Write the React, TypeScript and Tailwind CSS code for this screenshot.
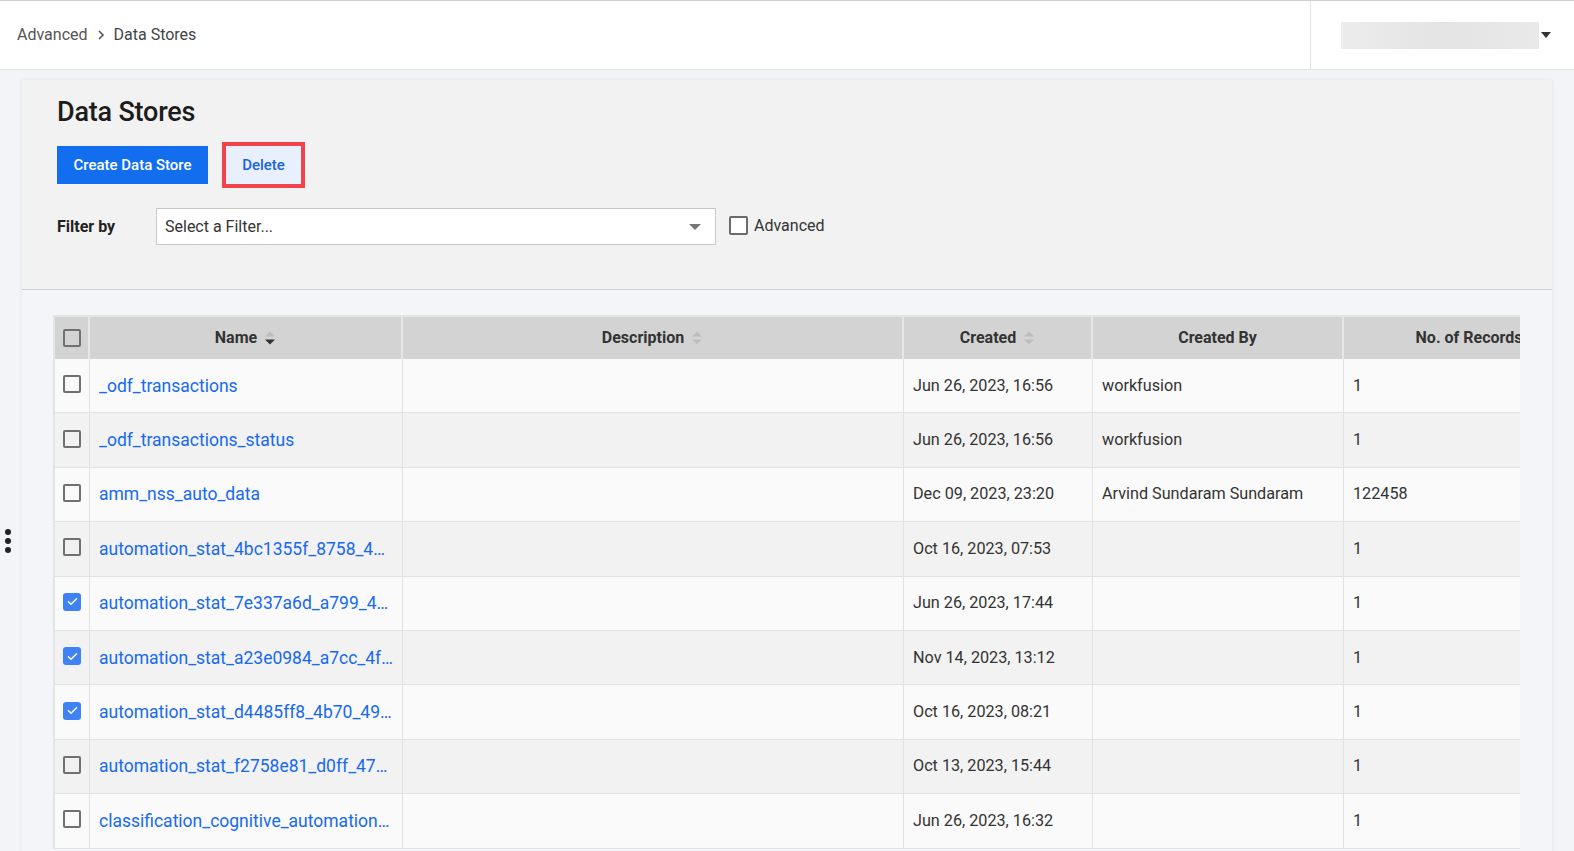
import React from 'react';

interface StoreRow {
  name: string;
  created: string;
  createdBy: string;
  records: string;
  checked: boolean;
}

const rows: StoreRow[] = [
  { name: '_odf_transactions', created: 'Jun 26, 2023, 16:56', createdBy: 'workfusion', records: '1', checked: false },
  { name: '_odf_transactions_status', created: 'Jun 26, 2023, 16:56', createdBy: 'workfusion', records: '1', checked: false },
  { name: 'amm_nss_auto_data', created: 'Dec 09, 2023, 23:20', createdBy: 'Arvind Sundaram Sundaram', records: '122458', checked: false },
  { name: 'automation_stat_4bc1355f_8758_4a0c_9e1d', created: 'Oct 16, 2023, 07:53', createdBy: '', records: '1', checked: false },
  { name: 'automation_stat_7e337a6d_a799_4b21_8c3e', created: 'Jun 26, 2023, 17:44', createdBy: '', records: '1', checked: true },
  { name: 'automation_stat_a23e0984_a7cc_4f2a_91b0', created: 'Nov 14, 2023, 13:12', createdBy: '', records: '1', checked: true },
  { name: 'automation_stat_d4485ff8_4b70_49e2_a6c1', created: 'Oct 16, 2023, 08:21', createdBy: '', records: '1', checked: true },
  { name: 'automation_stat_f2758e81_d0ff_47b3_8a2d', created: 'Oct 13, 2023, 15:44', createdBy: '', records: '1', checked: false },
  { name: 'classification_cognitive_automation_store', created: 'Jun 26, 2023, 16:32', createdBy: '', records: '1', checked: false },
];

const CheckBox: React.FC<{ checked?: boolean }> = ({ checked }) =>
  checked ? (
    <span className="w-[18px] h-[18px] rounded-[3px] bg-[#3f82f5] flex items-center justify-center">
      <svg viewBox="0 0 16 16" className="w-[13px] h-[13px]">
        <path d="M3 8.2l3.2 3.2L13 4.6" fill="none" stroke="#fff" strokeWidth="1.8" strokeLinecap="round" strokeLinejoin="round" />
      </svg>
    </span>
  ) : (
    <span className="w-[18px] h-[18px] rounded-[2px] border-2 border-[#707070] block" />
  );

const SortIcon: React.FC<{ active?: boolean }> = ({ active }) => (
  <svg viewBox="0 0 12 18" className="w-[12px] h-[18px]">
    <path d="M1 7.5L6 2.5L11 7.5Z" fill="#bdbdbd" />
    <path d="M1 10.5L6 15.5L11 10.5Z" fill={active ? '#333' : '#bdbdbd'} />
  </svg>
);

const cols = ['w-[35px]', 'w-[313px]', 'w-[501px]', 'w-[189px]', 'w-[251px]', 'w-[250px]'];

const App: React.FC = () => {
  return (
    <div className="w-full h-[851px] overflow-hidden relative bg-[#f3f4f8] text-[#333] font-['Roboto','Liberation_Sans',sans-serif]">
      {/* top bar */}
      <div className="h-[70px] bg-white border-t border-[#cfcfcf] border-b border-b-[#e2e2e2] flex">
        <div className="flex-1 flex items-center pl-[17px] text-[16px] text-[#555]">
          <span>Advanced</span>
          <svg viewBox="0 0 10 10" className="w-[10px] h-[10px] mx-[8px]">
            <path d="M3 1l4 4-4 4" fill="none" stroke="#555" strokeWidth="1.6" />
          </svg>
          <span className="text-[#444]">Data Stores</span>
        </div>
        <div className="w-[264px] border-l border-[#e4e4e4] flex items-center pl-[30px]">
          <div className="w-[198px] h-[27px] bg-gradient-to-r from-[#ececec] via-[#e4e4e4] to-[#e9e9e9] blur-[0.5px]" />
          <svg viewBox="0 0 10 6" className="w-[10px] h-[6px] ml-[2px]">
            <path d="M0 0h10L5 6Z" fill="#333" />
          </svg>
        </div>
      </div>

      {/* side handle */}
      <div className="absolute left-[5px] top-[529px] flex flex-col gap-[3px]">
        <span className="w-[6px] h-[6px] rounded-full bg-[#222]" />
        <span className="w-[6px] h-[6px] rounded-full bg-[#222]" />
        <span className="w-[6px] h-[6px] rounded-full bg-[#222]" />
      </div>

      {/* card */}
      <div className="ml-[22px] mr-[22px] mt-[10px] bg-[#f4f5f8] shadow-[0_0_4px_rgba(0,0,0,0.08)] h-[900px]">
        <div className="bg-[#f2f2f2] border-b border-[#d2d2d2] pl-[35px] pt-[16px] pb-[44px]">
          <h1 className="text-[27px] leading-[32px] font-medium text-[#1c1c1c] tracking-[-0.2px]">Data Stores</h1>
          <div className="flex items-center mt-[18px]">
            <button className="h-[38px] w-[151px] bg-[#126def] text-white text-[15px] font-medium">Create Data Store</button>
            <button className="h-[38px] w-[75px] ml-[18px] bg-[#e9f0fd] text-[#1a63d8] text-[15px] font-medium outline-[4px] outline-solid outline-[#f2434a]">Delete</button>
          </div>
          <div className="flex items-center mt-[24px]">
            <span className="w-[99px] text-[16px] font-bold text-[#222]">Filter by</span>
            <div className="w-[560px] h-[37px] bg-white border border-[#c9c9c9] flex items-center pl-[8px] pr-[14px]">
              <span className="flex-1 text-[16px] text-[#333]">Select a Filter...</span>
              <svg viewBox="0 0 12 6" className="w-[12px] h-[6px]">
                <path d="M0 0h12L6 6Z" fill="#777" />
              </svg>
            </div>
            <label className="flex items-center ml-[13px] -mt-[2px]">
              <span className="w-[19px] h-[19px] rounded-[2px] border-2 border-[#6b6b6b] bg-white block" />
              <span className="ml-[6px] text-[16px] text-[#333]">Advanced</span>
            </label>
          </div>
        </div>

        {/* table */}
        <div className="pl-[31px] pr-[32px] pt-[25px]">
          <div className="overflow-hidden border-l-2 border-t-2 border-[#e4e4e4]">
            <div className="w-[1540px]">
              <div className="flex h-[42px] bg-[#d3d3d3] text-[16px] font-bold text-[#333]">
                <div className={`${cols[0]} border-r-2 border-[#e6e6e6] flex items-center justify-center`}>
                  <CheckBox />
                </div>
                <div className={`${cols[1]} border-r-2 border-[#e6e6e6] flex items-center justify-center gap-[7px]`}>
                  Name <SortIcon active />
                </div>
                <div className={`${cols[2]} border-r-2 border-[#e6e6e6] flex items-center justify-center gap-[7px]`}>
                  Description <SortIcon />
                </div>
                <div className={`${cols[3]} border-r-2 border-[#e6e6e6] flex items-center justify-center gap-[7px]`}>
                  Created <SortIcon />
                </div>
                <div className={`${cols[4]} border-r-2 border-[#e6e6e6] flex items-center justify-center`}>Created By</div>
                <div className={`${cols[5]} flex items-center justify-center`}>No. of Records</div>
              </div>
              {rows.map((r, i) => (
                <div
                  key={r.name}
                  className={`flex h-[54.4px] border-b border-[#e2e2e2] text-[16.2px] text-[#333] ${i % 2 === 0 ? 'bg-[#fafafa]' : 'bg-[#f2f2f2]'}`}
                >
                  <div className={`${cols[0]} border-r border-[#e2e2e2] flex items-center justify-center pb-[3px]`}>
                    <CheckBox checked={r.checked} />
                  </div>
                  <div className={`${cols[1]} border-r border-[#e2e2e2] flex items-center pl-[9px] pr-[8px] min-w-0`}>
                    <span className="truncate text-[17.5px] text-[#1769ee]">{r.name}</span>
                  </div>
                  <div className={`${cols[2]} border-r border-[#e2e2e2]`} />
                  <div className={`${cols[3]} border-r border-[#e2e2e2] flex items-center pl-[9px]`}>{r.created}</div>
                  <div className={`${cols[4]} border-r border-[#e2e2e2] flex items-center pl-[9px]`}>{r.createdBy}</div>
                  <div className={`${cols[5]} flex items-center pl-[9px]`}>{r.records}</div>
                </div>
              ))}
            </div>
          </div>
        </div>
      </div>
    </div>
  );
};

export default App;
